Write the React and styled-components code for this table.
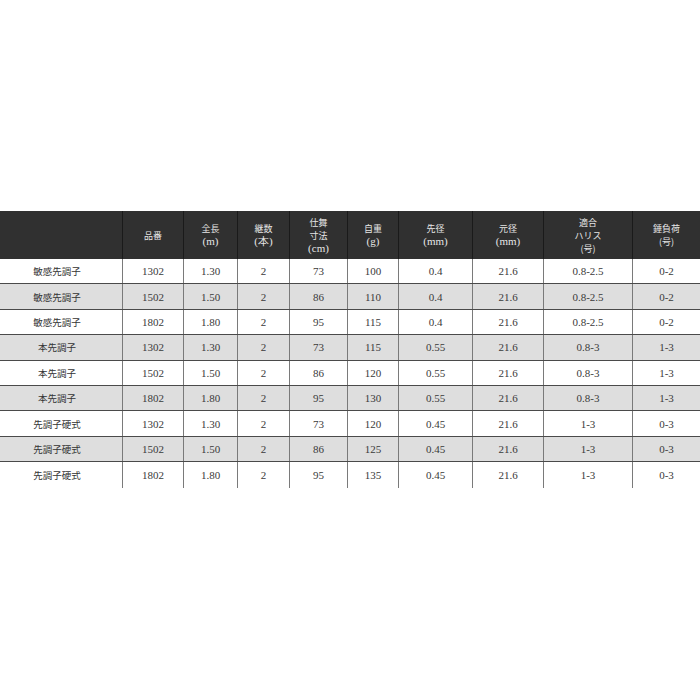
import React from 'react';
import styled, { createGlobalStyle } from 'styled-components';

const GlobalStyle = createGlobalStyle`
  html, body {
    margin: 0;
    padding: 0;
    background: #ffffff;
  }
`;

const columns = '122px 61px 54px 52px 58px 51px 74px 71px 89px 68px';

const headers = [
  [''],
  ['品番'],
  ['全長', '(m)'],
  ['継数', '(本)'],
  ['仕舞', '寸法', '(cm)'],
  ['自重', '(g)'],
  ['先径', '(mm)'],
  ['元径', '(mm)'],
  ['適合', 'ハリス', '(号)'],
  ['錘負荷', '(号)'],
];

const rows = [
  ['敏感先調子', '1302', '1.30', '2', '73', '100', '0.4', '21.6', '0.8-2.5', '0-2'],
  ['敏感先調子', '1502', '1.50', '2', '86', '110', '0.4', '21.6', '0.8-2.5', '0-2'],
  ['敏感先調子', '1802', '1.80', '2', '95', '115', '0.4', '21.6', '0.8-2.5', '0-2'],
  ['本先調子', '1302', '1.30', '2', '73', '115', '0.55', '21.6', '0.8-3', '1-3'],
  ['本先調子', '1502', '1.50', '2', '86', '120', '0.55', '21.6', '0.8-3', '1-3'],
  ['本先調子', '1802', '1.80', '2', '95', '130', '0.55', '21.6', '0.8-3', '1-3'],
  ['先調子硬式', '1302', '1.30', '2', '73', '120', '0.45', '21.6', '1-3', '0-3'],
  ['先調子硬式', '1502', '1.50', '2', '86', '125', '0.45', '21.6', '1-3', '0-3'],
  ['先調子硬式', '1802', '1.80', '2', '95', '135', '0.45', '21.6', '1-3', '0-3'],
];

const App = () => (
  <Page>
    <GlobalStyle />
    <SpecTable>
      <HeaderRow>
        {headers.map((lines, i) => (
          <HeaderCell key={i} $first={i === 0}>
            {lines.map((line, j) => (
              <HeaderLine key={j} $serif={line.startsWith('(') && line !== '(号)'}>
                {line}
              </HeaderLine>
            ))}
          </HeaderCell>
        ))}
      </HeaderRow>
      {rows.map((row, r) => (
        <BodyRow key={r} $shaded={r % 2 === 1} $last={r === rows.length - 1}>
          {row.map((value, c) =>
            c === 0 ? (
              <NameCell key={c}>{value}</NameCell>
            ) : (
              <ValueCell key={c}>{value}</ValueCell>
            )
          )}
        </BodyRow>
      ))}
    </SpecTable>
  </Page>
);

export default App;

const Page = styled.div`
  width: 700px;
  height: 700px;
  padding-top: 211px;
  box-sizing: border-box;
  background: #ffffff;
`;

const SpecTable = styled.div`
  width: 700px;
`;

const HeaderRow = styled.div`
  display: grid;
  grid-template-columns: ${columns};
  height: 48px;
  background: #303030;
`;

const HeaderCell = styled.div`
  display: flex;
  flex-direction: column;
  align-items: center;
  justify-content: center;
  border-left: ${(p) => (p.$first ? 'none' : '1px solid #1a1a1a')};
  color: #e6e6e6;
`;

const HeaderLine = styled.div`
  font-family: ${(p) =>
    p.$serif
      ? '"Liberation Serif", serif'
      : '"Noto Sans CJK JP", sans-serif'};
  font-size: ${(p) => (p.$serif ? '11px' : '9px')};
  line-height: 13px;
  height: 13px;
  overflow: visible;
  white-space: nowrap;
`;

const BodyRow = styled.div`
  display: grid;
  grid-template-columns: ${columns};
  height: 25.4px;
  box-sizing: border-box;
  background: ${(p) => (p.$shaded ? '#dedede' : '#ffffff')};
  border-bottom: ${(p) => (p.$last ? 'none' : '1px solid #4a4a4a')};
`;

const NameCell = styled.div`
  display: flex;
  align-items: center;
  justify-content: center;
  padding-right: 8px;
  font-family: "Noto Sans CJK JP", sans-serif;
  font-size: 9.5px;
  color: #333333;
`;

const ValueCell = styled.div`
  display: flex;
  align-items: center;
  justify-content: center;
  border-left: 1px solid #7a7a7a;
  font-family: "Liberation Serif", serif;
  font-size: 11px;
  color: #3a3a3a;
`;
